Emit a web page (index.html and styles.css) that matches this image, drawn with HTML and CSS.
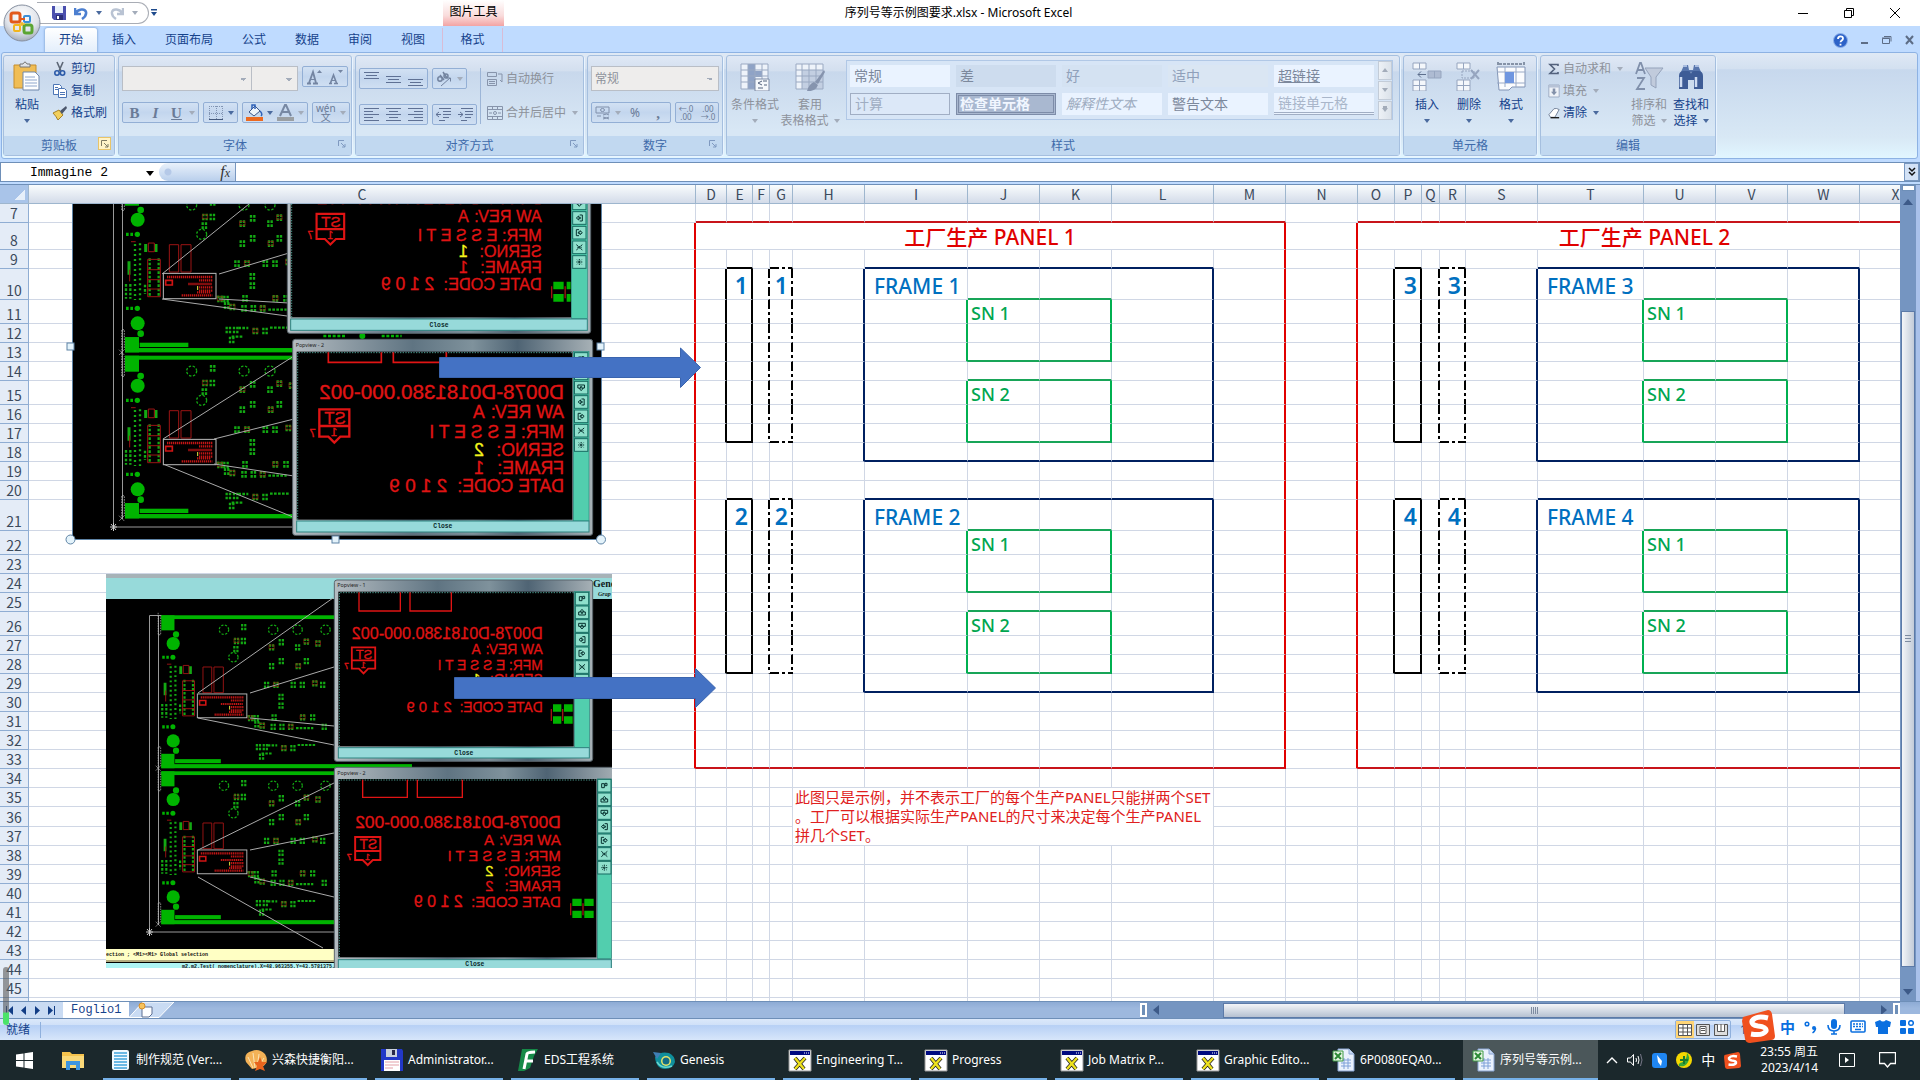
FILE: index.html
```html
<!DOCTYPE html>
<html lang="zh-CN">
<head>
  <meta charset="UTF-8" />
  <meta name="viewport" content="width=device-width, initial-scale=1.0" />
  <title>序列号等示例图要求.xlsx - Microsoft Excel</title>
  <link rel="stylesheet" href="styles.css">
</head>
<body>

<!-- Title bar -->
<header class="titlebar">
  <button class="office-btn" aria-label="Office">
    <svg width="38" height="38" viewBox="0 0 38 38">
      <defs>
        <radialGradient id="orb" cx="50%" cy="30%" r="75%"><stop offset="0" stop-color="#fff"/><stop offset=".6" stop-color="#dfe3ea"/><stop offset="1" stop-color="#9aa3b3"/></radialGradient>
      </defs>
      <circle cx="19" cy="19" r="18" fill="url(#orb)" stroke="#8790a0"/>
      <g fill="none" stroke-width="3">
        <rect x="8" y="9" width="9" height="9" rx="2" stroke="#e2591c"/>
        <rect x="21" y="12" width="6" height="6" rx="1" stroke="#3a8fd8" stroke-width="2"/>
        <rect x="11" y="21" width="6" height="6" rx="1" stroke="#f2b51d" stroke-width="2"/>
        <rect x="21" y="21" width="8" height="8" rx="2" stroke="#5ba532"/>
      </g>
      <path d="M17 15h5" stroke="#e2591c" stroke-width="2"/>
      <path d="M19 18v4M16 20h6" stroke="#f2b51d" stroke-width="1.500"/>
    </svg>
  </button>
  <div class="qat">
    <button aria-label="保存"><svg width="14" height="14" viewBox="0 0 14 14"><path d="M0 0h14v14H2l-2-2z" fill="#4a4fae"/><path d="M3 0h8v7H3z" fill="#e8f0fb"/><path d="M4 9h7v5H4z" fill="#2b2f78"/><path d="M5 10h2v3H5z" fill="#fff"/></svg></button>
    <button aria-label="撤消"><svg width="14" height="14" viewBox="0 0 14 14"><path d="M1 2v6h6M2 7c2-4 9-5 10-1 .6 3-1 5-4 7" fill="none" stroke="#4c7fd0" stroke-width="2.6"/></svg></button>
    <i class="caret blue"></i>
    <button aria-label="恢复"><svg width="14" height="14" viewBox="0 0 14 14"><path d="M13 2v6H7M12 7C10 3 3 2 2 6c-.6 3 1 5 4 7" fill="none" stroke="#b9c3d3" stroke-width="2.4"/></svg></button>
    <i class="caret"></i>
  </div>
  <button class="qat-more" aria-label="自定义快速访问工具栏"><svg width="6" height="8" viewBox="0 0 6 8"><path d="M0 0h6v1.500H0zM0 3h6L3 7z" fill="#1e4a8c"/></svg></button>
  <span class="tool-title">图片工具</span>
  <h1>序列号等示例图要求.xlsx - Microsoft Excel</h1>
  <div class="window-btns">
    <button aria-label="最小化"><svg width="10" height="10"><path d="M0 5.500h10" stroke="#000"/></svg></button>
    <button aria-label="还原"><svg width="10" height="10" fill="none" stroke="#000"><path d="M.5 2.500h7v7h-7zM2.500 2.500v-2h7v7h-2"/></svg></button>
    <button aria-label="关闭"><svg width="10" height="10"><path d="M0 0l10 10M10 0L0 10" stroke="#000"/></svg></button>
  </div>
</header>

<!-- Ribbon tabs -->
<nav class="tabs">
  <a href="#" class="active">开始</a>
  <a href="#">插入</a>
  <a href="#">页面布局</a>
  <a href="#">公式</a>
  <a href="#">数据</a>
  <a href="#">审阅</a>
  <a href="#">视图</a>
  <a href="#" class="context">格式</a>
  <div class="doc-btns">
    <button aria-label="帮助"><svg width="15" height="15" viewBox="0 0 15 15"><circle cx="7.500" cy="7.500" r="7" fill="#2c62c8" stroke="#8fb2ea"/><path d="M5 6c0-3.500 5-3.500 5-.5C10 7.500 7.500 7.300 7.500 9.300M7.500 10.800v1.700" fill="none" stroke="#fff" stroke-width="1.800"/></svg></button>
    <button aria-label="最小化窗口"><svg width="8" height="10"><path d="M0 8h7" stroke="#5d6d86" stroke-width="2"/></svg></button>
    <button aria-label="还原窗口"><svg width="10" height="10" fill="none" stroke="#5d6d86"><path d="M.5 3.500h7v5h-7zM2 1.500h7v5M0 3h8"/></svg></button>
    <button aria-label="关闭窗口"><svg width="9" height="10"><path d="M1 1l7 8M8 1L1 9" stroke="#5d6d86" stroke-width="2"/></svg></button>
  </div>
</nav>

<!-- Ribbon -->
<section class="ribbon">
  <div class="group g-clip">
    <div class="group-body">
      <button class="big">
        <svg width="28" height="30" viewBox="0 0 28 30"><path d="M1 4h22v23H1z" fill="#f0bd55" stroke="#c58d2c"/><path d="M7 6V3h3q2-4 4 0h3v3z" fill="#dfe3e8" stroke="#777"/><path d="M10 11h12l4 4v14H10z" fill="#fdfeff" stroke="#6f87ab"/><path d="M12 16h10M12 19h12M12 22h12M12 25h12" stroke="#8ea6cc"/></svg>
        <span>粘贴</span><i class="caret blue"></i>
      </button>
      <div class="stack">
        <button class="small"><svg width="16" height="16" viewBox="0 0 16 16"><path d="M5 1l4 9M11 1L7 10" stroke="#5c6675" stroke-width="1.600"/><circle cx="5" cy="12" r="2.200" fill="none" stroke="#2b5aa8" stroke-width="1.600"/><circle cx="10.500" cy="12" r="2.200" fill="none" stroke="#2b5aa8" stroke-width="1.600"/></svg>剪切</button>
        <button class="small"><svg width="16" height="16" viewBox="0 0 16 16" fill="#fff" stroke="#4d76b5"><path d="M1.500 1.500h6l2 2v8h-8z"/><path d="M6.500 5.500h6l2 2v7h-8z"/><path d="M3 4.500h3M3 6.500h3M8 9.500h5M8 11.500h5"/></svg>复制</button>
        <button class="small"><svg width="16" height="16" viewBox="0 0 16 16"><path d="M1 8l6-3 4 5-5 5q-2-4-5-7z" fill="#f2cf5b" stroke="#a58026"/><path d="M8 6l6-5 1 2-5 6z" fill="#4b566b"/></svg>格式刷</button>
      </div>
    </div>
    <h2>剪贴板<button class="launcher hot" aria-label="剪贴板选项"><svg width="8" height="8" fill="none" stroke="#7e7a62"><path d="M.5 6V.5H6M3 3l4 4M7 4v3H4"/></svg></button></h2>
  </div>

  <div class="group g-font">
    <div class="group-body rows">
      <div class="row">
        <select class="combo font-name" aria-label="字体"><option></option></select><select class="combo font-size" aria-label="字号"><option></option></select>
        <div class="btns push">
          <button aria-label="增大字号"><svg width="17" height="16" viewBox="0 0 17 16" fill="none" stroke="#7485a2"><path d="M1 14.500h4M7 14.500h5M3 14L7 3l3 11" stroke-width="1.800"/><path d="M4 10.500h5"/><path d="M11 4h5l-2.500-3z" fill="#7485a2" stroke="none"/></svg></button>
          <button aria-label="减小字号"><svg width="17" height="16" viewBox="0 0 17 16" fill="none" stroke="#7485a2"><path d="M2 14.500h3M7 14.500h4M3.500 14L6.500 6l3 8" stroke-width="1.600"/><path d="M4.500 11.500h4"/><path d="M11 1h5l-2.500 3z" fill="#7485a2" stroke="none"/></svg></button>
        </div>
      </div>
      <div class="row">
        <div class="btns biu"><button class="serif">B</button><button class="serif it">I</button><button class="serif un">U</button><i class="caret"></i></div>
        <div class="btns"><button aria-label="边框"><svg width="14" height="14" stroke="#8295b3" stroke-dasharray="1 1"><path d="M0 .5h14M0 7.500h14M.5 0v14M7.500 0v14M13.500 0v14"/><path d="M0 13.500h14" stroke-dasharray="none" stroke="#44597d"/></svg></button><i class="caret blue"></i></div>
        <div class="btns"><button aria-label="填充颜色"><svg width="17" height="17" viewBox="0 0 17 17"><path d="M3 8l6-6 5 5-6 5z" fill="#eef4fc" stroke="#3c5688"/><path d="M6 5V1h3v4M14 7q3 3 1 5" fill="none" stroke="#2f62b8" stroke-width="1.500"/><path d="M0 13h17v4H0z" fill="#ec6a21"/></svg></button><i class="caret blue"></i><button aria-label="字体颜色"><svg width="17" height="17" viewBox="0 0 17 17"><path d="M3 12L8 1h1l5 11M5 8h7" fill="none" stroke="#7788a3" stroke-width="2"/><path d="M0 13h17v4H0z" fill="#9a9fa3"/></svg></button><i class="caret"></i></div>
        <div class="btns"><button class="wen" aria-label="拼音指南"><span>wén</span><span>文</span></button><i class="caret"></i></div>
      </div>
    </div>
    <h2>字体<button class="launcher" aria-label="字体选项"><svg width="8" height="8" fill="none" stroke="#7f99c0"><path d="M.5 6V.5H6M3 3l4 4M7 4v3H4"/></svg></button></h2>
  </div>

  <div class="group g-align">
    <div class="group-body">
      <div class="rows">
        <div class="row">
          <div class="btns three">
            <button aria-label="顶端对齐"><svg class="ln" width="15" height="14"><path d="M0 .5h15M2 3.500h11M0 6.500h15"/></svg></button>
            <button aria-label="垂直居中"><svg class="ln" width="15" height="14"><path d="M0 4.500h15M2 7.500h11M0 10.500h15"/></svg></button>
            <button aria-label="底端对齐"><svg class="ln" width="15" height="14"><path d="M0 7.500h15M2 10.500h11M0 13.500h15"/></svg></button>
          </div>
          <div class="btns"><button aria-label="方向"><svg width="17" height="16" viewBox="0 0 17 16" fill="none" stroke="#73839f" stroke-width="1.500"><circle cx="4" cy="8" r="2.200"/><path d="M4 4l4 5M7 1l4 6"/><circle cx="10" cy="5" r="2"/><path d="M5 15l9-8M11 7h3.500v3.500" stroke-width="1"/></svg></button><i class="caret"></i></div>
        </div>
        <div class="row">
          <div class="btns three">
            <button aria-label="左对齐"><svg class="ln" width="15" height="14"><path d="M0 .5h15M0 3.500h9M0 6.500h15M0 9.500h9M0 12.500h15"/></svg></button>
            <button aria-label="居中"><svg class="ln" width="15" height="14"><path d="M0 .5h15M3 3.500h9M0 6.500h15M3 9.500h9M0 12.500h15"/></svg></button>
            <button aria-label="右对齐"><svg class="ln" width="15" height="14"><path d="M0 .5h15M6 3.500h9M0 6.500h15M6 9.500h9M0 12.500h15"/></svg></button>
          </div>
          <div class="btns two">
            <button aria-label="减少缩进量"><svg class="ln" width="15" height="14"><path d="M3 .5h12M7 3.500h8M7 6.500h8M7 9.500h6M3 12.500h6M5 6.500H0M3 4L0 6.500l3 2.500"/></svg></button>
            <button aria-label="增加缩进量"><svg class="ln" width="15" height="14"><path d="M3 .5h12M7 3.500h8M7 6.500h8M7 9.500h6M3 12.500h6M0 6.500h5M2 4l3 2.500L2 9"/></svg></button>
          </div>
        </div>
      </div>
      <div class="rows wrap">
        <button class="small off"><svg width="16" height="16" fill="none" stroke="#8794ab"><path d="M.5 1.500h9v4h-9zM.5 8.500h9v6h-9zM2 10.500h6M2 12.500h6M11 3h4v8M13 9l2 2"/></svg>自动换行</button>
        <button class="small off"><svg width="16" height="16" fill="none" stroke="#8794ab"><path d="M.5 1.500h15v13H.5zM0 4.500h16M0 11.500h16M5.500 1v3M10.500 1v3M5.500 12v3M10.500 12v3M2 8h3M11 8h3"/><circle cx="8" cy="8" r="1.500"/></svg>合并后居中<i class="caret"></i></button>
      </div>
    </div>
    <h2>对齐方式<button class="launcher" aria-label="对齐选项"><svg width="8" height="8" fill="none" stroke="#7f99c0"><path d="M.5 6V.5H6M3 3l4 4M7 4v3H4"/></svg></button></h2>
  </div>

  <div class="group g-num">
    <div class="group-body rows">
      <div class="row"><select class="combo num-format" aria-label="数字格式"><option>常规</option></select></div>
      <div class="row spread">
        <div class="btns"><button aria-label="会计数字格式"><svg width="16" height="15" fill="none" stroke="#8090ab"><path d="M1 2h13v6H1z"/><ellipse cx="7.500" cy="5" rx="2" ry="1.500"/><path d="M8 10q4-2 6 0M8 12q4 2 6 0M8 14q4-2 6 0M2 11h4"/></svg></button><i class="caret"></i><button class="pct">%</button><button class="comma serif">,</button></div>
        <div class="btns two"><button class="dec">←.0<br>.00</button><button class="dec">.00<br>→.0</button></div>
      </div>
    </div>
    <h2>数字<button class="launcher" aria-label="数字选项"><svg width="8" height="8" fill="none" stroke="#7f99c0"><path d="M.5 6V.5H6M3 3l4 4M7 4v3H4"/></svg></button></h2>
  </div>

  <div class="group g-style">
    <div class="group-body">
      <button class="big off">
        <svg width="30" height="30" viewBox="0 0 30 30"><path d="M1 3h27v25H1z" fill="#eef3fa"/><path d="M8 3h7v25H8zM15 10h7v6h-7z" fill="#8fa3c6"/><path d="M1 3h27v25H1zM1 9h27M1 15h27M1 21h27M8 3v25M15 3v25M22 3v25" fill="none" stroke="#9aa9c2"/><path d="M15 18h14v12H15z" fill="#f5f8fc" stroke="#7c8ba6"/><path d="M22 20l-4 2 4 2M18 27h5M23 20h4M24 24h3" fill="none" stroke="#53627d"/></svg>
        <span>条件格式</span><i class="caret"></i>
      </button>
      <button class="big off">
        <svg width="30" height="30" viewBox="0 0 30 30"><path d="M1 3h27v25H1z" fill="#eef3fa"/><path d="M7 9h21v19H7z" fill="#c3cfe2"/><path d="M1 3h27v25H1zM1 9h27M1 15h27M1 21h27M7 3v25M14 3v25M21 3v25" fill="none" stroke="#9aa9c2"/><path d="M29 9L20 21l3 2 7-12zM19 21q-5 2-7 9 8 1 11-6z" fill="#8694ae"/></svg>
        <span>套用<br>表格格式<i class="caret"></i></span>
      </button>
      <div class="gallery">
        <div class="swatches">
          <button class="s-plain">常规</button><button class="s-bad">差</button><button class="s-good">好</button><button class="s-mid">适中</button><button class="s-link">超链接</button>
          <button class="s-calc">计算</button><button class="s-check">检查单元格</button><button class="s-note">解释性文本</button><button class="s-plain">警告文本</button><button class="s-linked">链接单元格</button>
        </div>
        <div class="gallery-nav"><button aria-label="上"><i class="caret up"></i></button><button aria-label="下"><i class="caret"></i></button><button class="more" aria-label="其他"><i class="caret"></i></button></div>
      </div>
    </div>
    <h2>样式</h2>
  </div>

  <div class="group g-cells">
    <div class="group-body">
      <button class="big"><svg width="30" height="30" viewBox="0 0 30 30" fill="#f4f7fb" stroke="#96a5bf"><path d="M1 2h13v6H1zM1 19h13v11H1zM1 24.500h13M7.500 2v6M7.500 19v11"/><path d="M16 10h13v7H16zM22.500 10v7" fill="#aebbd2"/><path d="M14 13.500H6M9 10.500l-3 3 3 3" fill="none" stroke="#5e6f8d"/></svg><span>插入</span><i class="caret blue"></i></button>
      <button class="big"><svg width="30" height="30" viewBox="0 0 30 30" fill="#f4f7fb" stroke="#96a5bf"><path d="M3 2h13v6H3zM3 19h13v11H3zM3 24.500h13M9.500 2v6M9.500 19v11"/><path d="M8 10h12v7H8z" fill="none" stroke-dasharray="2 1"/><path d="M17 9l8 9M25 9l-8 9" stroke-width="2"/></svg><span>删除</span><i class="caret blue"></i></button>
      <button class="big"><svg width="30" height="30" viewBox="0 0 30 30"><path d="M2 1v4M28 1v4M3 3h24" stroke="#33425c" stroke-dasharray="3 1"/><path d="M1 6h28v20H16l-3 3H3z" fill="#fbfcfe" stroke="#8194b5"/><path d="M9 6v20M20 6v20M1 11h28M1 22h28" stroke="#9aaac6"/><path d="M9 11h9v11H9z" fill="#6f96e0"/></svg><span>格式</span><i class="caret blue"></i></button>
    </div>
    <h2>单元格</h2>
  </div>

  <div class="group g-edit">
    <div class="group-body">
      <div class="stack">
        <button class="small off"><svg width="12" height="14"><path d="M10 4V2.500H2L6.500 7 2 11.500h8V10" fill="none" stroke="#53627d" stroke-width="1.600"/></svg>自动求和<i class="caret"></i></button>
        <button class="small off"><svg width="12" height="16" viewBox="0 0 14 16"><path d="M1 1h12v14H1z" fill="#eef2f8" stroke="#96a5bf"/><path d="M1 1h12v3H1z" fill="#b6c2d6"/><path d="M5.500 5h3v4h2L7 13 3.500 9h2z" fill="#8391aa"/></svg>填充<i class="caret"></i></button>
        <button class="small"><svg width="12" height="14" viewBox="0 0 14 14"><path d="M1 9l6-7q3-1 6 1L8 12H3z" fill="#fff" stroke="#66758f"/><path d="M3 12.500h10" stroke="#111" stroke-width="1.500"/></svg>清除<i class="caret blue"></i></button>
      </div>
      <button class="big off"><svg width="30" height="30" viewBox="0 0 30 30"><path d="M2 13L6 2h1l4 11M4 9h6M3 17h7L3 28h8" fill="none" stroke="#8090ab" stroke-width="1.800"/><path d="M11 7h18l-7 9v11l-5-3v-8z" fill="#c1cbdc" stroke="#95a3bb"/></svg><span>排序和<br>筛选<i class="caret"></i></span></button>
      <button class="big"><svg width="30" height="30" viewBox="0 0 30 30"><path d="M5 11l3-7h4l1 5h4l1-5h4l3 7z" fill="#5876ad"/><path d="M3 15q0-5 5-5h4q3 0 3 3 0-3 3-3h4q5 0 5 5v13h-9v-9h-6v9H3z" fill="#3e5c96"/><path d="M5 16v10M20 16v10" stroke="#cfdcf2" stroke-width="2.500"/><path d="M7 5h4M19 5h4" stroke="#a9bde0" stroke-width="2"/></svg><span>查找和<br>选择<i class="caret blue"></i></span></button>
    </div>
    <h2>编辑</h2>
  </div>
</section>

<!-- Formula bar -->
<section class="formula-bar">
  <div class="name-box"><input type="text" value="Immagine 2" aria-label="名称框"><i class="caret black"></i></div>
  <button class="fx" aria-label="插入函数"><i>f<small>x</small></i></button>
  <input class="formula" type="text" aria-label="编辑栏">
  <button class="expand" aria-label="展开编辑栏"><svg width="8" height="10" fill="none" stroke="#111" stroke-width="1.500"><path d="M1 1l3 3 3-3M1 5l3 3 3-3"/></svg></button>
</section>

<!-- Worksheet -->
<main class="workspace">
  <div class="sheet">
    <table id="grid"></table>
    <svg class="drawings" id="drawings" aria-hidden="true"></svg>
  </div>
  <div class="vscroll">
    <i class="split"></i>
    <i class="caret up dark"></i>
    <i class="thumb"></i>
    <i class="caret dark"></i>
  </div>
</main>

<footer class="sheet-tabs">
  <div class="nav">
    <button aria-label="第一张"><svg width="8" height="9"><path d="M.5 0v9" stroke="#123d85"/><path d="M7 0v9L2 4.500z" fill="#123d85"/></svg></button>
    <button aria-label="上一张"><svg width="8" height="9"><path d="M6 0v9L1 4.500z" fill="#123d85"/></svg></button>
    <button aria-label="下一张"><svg width="8" height="9"><path d="M1 0v9l5-4.500z" fill="#123d85"/></svg></button>
    <button aria-label="最后一张"><svg width="8" height="9"><path d="M0 0v9l5-4.500z" fill="#123d85"/><path d="M6.500 0v9" stroke="#123d85"/></svg></button>
  </div>
  <a href="#" class="sheet-tab">Foglio1</a>
  <button class="new-tab" aria-label="插入工作表"><svg width="46" height="16" viewBox="0 0 46 16"><path d="M0 15.500h30L45 0H14z" fill="#c9dbf3" stroke="#fff"/><path d="M13 5h10v7l-3 3h-7z" fill="#fff" stroke="#5d6f92"/><circle cx="13" cy="4" r="3" fill="#f7c35d" stroke="#d98e26"/></svg></button>
  <div class="hscroll">
    <i class="split"></i>
    <i class="caret left dark"></i>
    <i class="thumb"></i>
    <i class="caret right dark"></i>
    <i class="split"></i>
  </div>
</footer>

<footer class="status">
  <span>就绪</span>
  <div class="views">
    <button class="on" aria-label="普通"><svg width="14" height="12" fill="#fff" stroke="#555"><path d="M.5.5h13v11H.5zM0 4h14M0 8h14M5 0v12M9.500 0v12"/></svg></button>
    <button aria-label="页面布局"><svg width="14" height="12" fill="#ddd" stroke="#555"><path d="M.5.5h13v11H.5z"/><path d="M4 2.500h6v7H4zM5 4.500h4M5 6.500h4" fill="#fff"/></svg></button>
    <button aria-label="分页预览"><svg width="14" height="12" fill="#ddd" stroke="#555"><path d="M.5.5h13v11H.5z"/><path d="M3.500.5v7h7v-7M7 0v7" fill="#fff"/></svg></button>
  </div>
  <span class="zoom">1</span>
  <i class="meter"></i>
  <div class="ime">
    <svg class="sogou" width="34" height="34" viewBox="0 0 34 34"><path d="M1 8L26 1q3 0 4 4l3 22q0 4-4 4L8 34q-4 0-5-4L0 12z" fill="#f0501e"/><path d="M26 9Q14 6 10 12q-1 4 6 5 9 1 8 5-3 5-15 3" fill="none" stroke="#fff" stroke-width="5"/></svg>
    <span>中</span>
    <svg width="14" height="14" viewBox="0 0 14 14"><circle cx="3" cy="4" r="1.800" fill="none" stroke="#0a6fe0" stroke-width="1.500"/><circle cx="10" cy="8" r="2" fill="#0a6fe0"/><path d="M11.500 8q0 3-3 5" fill="none" stroke="#0a6fe0" stroke-width="1.500"/></svg>
    <svg width="14" height="16" viewBox="0 0 14 16"><rect x="4" y="0" width="6" height="10" rx="3" fill="#0a6fe0"/><path d="M1 6q0 6 6 6t6-6M7 12v3M4 15h6" fill="none" stroke="#0a6fe0" stroke-width="1.600"/></svg>
    <svg width="16" height="14" viewBox="0 0 16 14"><rect x="1" y="1" width="14" height="11" rx="1" fill="none" stroke="#0a6fe0" stroke-width="1.600"/><path d="M3 4h10M3 6.500h10" stroke="#0a6fe0" stroke-width="1.500" stroke-dasharray="2 1"/><path d="M5 9.500h6" stroke="#0a6fe0" stroke-width="1.500"/></svg>
    <svg width="16" height="14" viewBox="0 0 16 14"><path d="M0 2l5-2q3 3 6 0l5 2-1 5h-2v7H3V7H1z" fill="#0a6fe0"/></svg>
    <svg width="14" height="14" viewBox="0 0 14 14" fill="#0a6fe0"><rect width="6" height="6" rx="1"/><circle cx="11" cy="3" r="2.300" fill="none" stroke="#0a6fe0" stroke-width="1.500"/><rect y="8" width="6" height="6" rx="1"/><rect x="8" y="8" width="6" height="6" rx="1"/></svg>
  </div>
</footer>

<!-- Windows taskbar -->
<footer class="taskbar">
  <button class="start" aria-label="开始"><svg width="17" height="17" viewBox="0 0 17 17" fill="#fff"><path d="M0 2.500L7.500 1.400V8H0zM8.500 1.200L17 0v8H8.500zM0 9h7.500v6.600L0 14.500zM8.500 9H17v8l-8.500-1.200z"/></svg></button>
  <button class="explorer" aria-label="文件资源管理器"><svg width="22" height="19" viewBox="0 0 22 19"><path d="M0 1h8l2 2h12v14H0z" fill="#f6c34d"/><path d="M0 5h22v12H0z" fill="#fbd978"/><path d="M4 10h14v9h-4v-5H8v5H4z" fill="#3d95e0"/></svg></button>
  <div class="apps">
    <button><svg width="24" height="24" viewBox="0 0 24 24"><rect x="4" y="2" width="17" height="20" rx="2" fill="#f1f9ff"/><path d="M6 5h13M6 8h13M6 11h13M6 14h13M6 17h13M6 20h13" stroke="#3fa2dc" stroke-width="1.600"/></svg>制作规范 (Ver:...</button>
    <button><svg width="24" height="24" viewBox="0 0 24 24"><path d="M8 21L2 14Q-1 5 8 3q7-3 13 3 5 8-3 13z" fill="#f3b257"/><path d="M9 20L4 9M11 20L9 5M13 20l2-14M14 19l6-9" stroke="#fbe3b5"/><path d="M16 9l2 5 5 0-4 4 2 5-5-2-5 2 2-5-3-4h4z" fill="#e8641d"/></svg>兴森快捷衡阳...</button>
    <button><svg width="24" height="24" viewBox="0 0 24 24"><path d="M1 1h21l1 2v20H1z" fill="#2238c8"/><path d="M6 1h11v8H6z" fill="#c9d0dc"/><path d="M12 2h3v5h-3z" fill="#2a2a4a"/><path d="M4 12h16v11H4z" fill="#fff"/><path d="M5 14h14M5 17h14M5 20h8" stroke="#e3a0a8"/></svg>Administrator...</button>
    <button><svg width="24" height="24" viewBox="0 0 24 24"><path d="M6 1h16l-4 7-4 12-6 3H2z" fill="#168a48"/><path d="M8 21L11 6q0-2 8-2M9 13h8" fill="none" stroke="#fff" stroke-width="3"/></svg>EDS工程系统</button>
    <button><svg width="24" height="24" viewBox="0 0 24 24"><path d="M3 9Q8 3 17 5q6 3 6 9-2 7-10 7-9 0-10-12z" fill="#0f8f9c"/><path d="M1 4l8 1-4 6z" fill="#3f7fb5"/><circle cx="14" cy="13" r="5" fill="#e4e36a"/><circle cx="14" cy="13" r="3.500" fill="#126c86"/><path d="M5 14q5 8 15 4" fill="none" stroke="#6ad8cf" stroke-width="1.500"/></svg>Genesis</button>
    <button><svg width="24" height="24"><use href="#xwin"/></svg>Engineering T...</button>
    <button><svg width="24" height="24"><use href="#xwin"/></svg>Progress</button>
    <button><svg width="24" height="24"><use href="#xwin"/></svg>Job Matrix P...</button>
    <button><svg width="24" height="24"><use href="#xwin"/></svg>Graphic Edito...</button>
    <button><svg width="24" height="24"><use href="#xls"/></svg>6P0080EQA0...</button>
    <button class="current"><svg width="24" height="24"><use href="#xls"/></svg>序列号等示例...</button>
  </div>
  <div class="tray">
    <svg width="12" height="8"><path d="M1 7l5-5 5 5" fill="none" stroke="#fff" stroke-width="1.400"/></svg>
    <svg width="16" height="14" viewBox="0 0 16 14" fill="none" stroke="#fff"><path d="M.5 5v4h3l3 3.500v-11L3.500 5zM9 5q1 2 0 4M11 3q2 4 0 8"/><path d="M13.500 1q3 6 0 12" stroke="#778"/></svg>
    <svg width="15" height="15"><rect width="15" height="15" rx="3" fill="#1f86f2"/><path d="M5 2l5 6-1 5-3-4z" fill="#fff"/></svg>
    <svg width="16" height="16"><circle cx="8" cy="8" r="8" fill="#f5d800"/><path d="M11 1a8 8 0 0 1-8 13q-1-2 1-3 7-2 7-10z" fill="#38a838"/><path d="M8 4v8M4 8h8" stroke="#1c7a2a" stroke-width="2"/></svg>
    <span>中</span>
    <svg width="17" height="17" viewBox="0 0 34 34"><path d="M1 6L28 0q3 0 4 4l2 24q0 3-4 4L7 34q-4 0-5-4L0 10z" fill="#f0501e"/><path d="M26 9Q14 6 10 12q-1 4 6 5 9 1 8 5-3 5-15 3" fill="none" stroke="#fff" stroke-width="5"/></svg>
    <time>23:55 周五<br>2023/4/14</time>
    <svg width="16" height="14"><path d="M.5.500h15v13H.5z" fill="none" stroke="#fff"/><path d="M6 4v6l4-3z" fill="#fff"/></svg>
    <svg width="17" height="16"><path d="M.5.500h16v11h-5l-3 3.500-3-3.500h-5z" fill="none" stroke="#fff" stroke-width="1.300"/></svg>
  </div>
</footer>

<svg class="defs" width="0" height="0" aria-hidden="true">
  <symbol id="xwin" viewBox="0 0 24 24"><path d="M1 2h22v21H1z" fill="#fff" stroke="#999"/><path d="M2 3h20v4H2z" fill="#000a80"/><path d="M16 5h5" stroke="#fff" stroke-dasharray="1 1"/><path d="M7 10l9 11M17 10L7 21" stroke="#222" stroke-width="4"/><path d="M7 10l9 11M17 10L7 21" stroke="#eee21e" stroke-width="2.500"/></symbol>
  <symbol id="xls" viewBox="0 0 24 24"><path d="M6 1h11l5 5v17H6z" fill="#e9f1fc" stroke="#8ba6d4"/><path d="M17 1v5h5" fill="#c7d8f2" stroke="#8ba6d4"/><path d="M9 12h10M9 15h10M9 18h10M12 10v11M16 10v11" stroke="#7fa0d8"/><path d="M1 3h10v10H1z" fill="#e6f5e4" stroke="#3f9a45"/><path d="M3 5l6 6M9 5l-6 6" stroke="#2c8a35" stroke-width="2"/></symbol>
</svg>

<script src="script.js"></script>
</body>
</html>
```

FILE: styles.css
```css
/* General */
* {
  box-sizing: border-box;
}

body {
  margin: 0;
  height: 100vh;
  display: flex;
  flex-direction: column;
  overflow: hidden;
  background: #bfdbff;
  color: #15428b;
  font-family: "Noto Sans", "Noto Sans CJK SC", sans-serif;
  font-size: 12px;
  line-height: 16px;
}

button, input, select {
  margin: 0;
  padding: 0;
  border: 0;
  background: none;
  color: inherit;
  font: inherit;
}

button {
  display: flex;
  align-items: center;
  justify-content: center;
}

a {
  color: inherit;
  text-decoration: none;
}

svg {
  display: block;
  flex: none;
}

.defs {
  position: absolute;
}

.caret {
  display: inline-block;
  flex: none;
  border: 3px solid transparent;
  border-top: 4px solid #a3acba;
  border-bottom: 0;
}
.caret.blue { border-top-color: #4a6a9e; }
.caret.black { border-width: 5px 4px 0; border-top-color: #000; }
.caret.dark { border-width: 6px 5px 0; border-top-color: #3d5a88; }
.caret.up { transform: rotate(180deg); }
.caret.left { transform: rotate(90deg); }
.caret.right { transform: rotate(-90deg); }

/* Title bar */
.titlebar {
  position: relative;
  flex: none;
  height: 26px;
  display: flex;
  align-items: center;
  background: #fff;
  color: #000;
}

.office-btn {
  position: absolute;
  left: 3px;
  top: 4px;
  z-index: 2;
}

.qat {
  display: flex;
  align-items: center;
  gap: 8px;
  height: 22px;
  margin-left: 37px;
  padding: 0 10px 0 15px;
  border: 1px solid #a9adb5;
  border-left: 0;
  border-radius: 0 11px 11px 0;
}

.qat-more {
  margin-left: 2px;
}

.tool-title {
  position: absolute;
  left: 443px;
  top: 0;
  width: 61px;
  height: 26px;
  line-height: 24px;
  text-align: center;
  background: linear-gradient(#fff, #f9dcdc 60%, #f3a3a3);
}

h1 {
  flex: 1;
  margin: 0;
  padding-right: 20px;
  text-align: center;
  font-size: 12px;
  font-weight: normal;
}

.window-btns {
  display: flex;
  padding-right: 2px;
}
.window-btns button {
  width: 46px;
  height: 26px;
}

/* Tabs */
.tabs {
  flex: none;
  display: flex;
  height: 26px;
  padding: 2px 6px 0 45px;
  gap: 1px;
}
.tabs a {
  padding: 0 14px;
  line-height: 23px;
}
.tabs .active {
  background: linear-gradient(#fff, #e3eefb);
  border-radius: 3px 3px 0 0;
  box-shadow: 0 0 2px 1px #96b6e2;
}
.tabs .context {
  width: 61px;
  margin-left: 2px;
  padding: 0;
  text-align: center;
  border: 1px solid #d8bcd6;
  border-width: 0 1px;
}

.doc-btns {
  display: flex;
  align-items: center;
  gap: 13px;
  margin-left: auto;
}

/* Ribbon */
.ribbon {
  flex: none;
  display: flex;
  gap: 3px;
  height: 107px;
  margin: 0 2px 3px 1px;
  padding: 2px 1px;
  border: 1px solid #8db2e3;
  border-radius: 3px;
  background: linear-gradient(#dfe9f5, #d3e0f0 15%, #c7d8ed 16%, #d8e8f5 80%, #e1f6ff);
}

.group {
  display: flex;
  flex-direction: column;
  border: 1px solid #a5bfdf;
  border-radius: 3px;
  background: linear-gradient(#dfe8f5, #d3dfef 15%, #c8d8ec 16%, #d8e7f5 75%);
  box-shadow: 1px 1px 0 #e9f4ff;
}
.g-clip { width: 112px; }
.g-font { width: 234px; }
.g-align { width: 229px; }
.g-num { width: 136px; }
.g-style { width: 674px; }
.g-cells { width: 134px; }
.g-edit { width: 176px; }

.group-body {
  flex: 1;
  display: flex;
  padding: 2px 3px 0;
}

.group h2 {
  position: relative;
  margin: 0;
  height: 19px;
  line-height: 20px;
  font-size: 12px;
  font-weight: normal;
  text-align: center;
  color: #3e6aaa;
  background: #c1d8f0;
}

.launcher {
  position: absolute;
  right: 3px;
  top: 1px;
  width: 13px;
  height: 13px;
}
.launcher.hot {
  border: 1px solid #e8c46a;
  background: #fff3c8;
}

.big {
  flex-direction: column;
  justify-content: flex-start;
  width: 42px;
  padding-top: 3px;
}
.big span {
  margin-top: 6px;
  white-space: nowrap;
}
.big > .caret {
  margin-top: 6px;
}
.big span .caret {
  margin: 0 0 2px 5px;
}

.stack {
  display: flex;
  flex-direction: column;
}

.small {
  justify-content: flex-start;
  gap: 3px;
  height: 22px;
  white-space: nowrap;
}

.off {
  color: #8d929b;
}

.g-clip .big { width: 34px; margin: 0 8px 0 3px; }
.g-style .big { width: 50px; margin-right: 5px; }
.g-cells .group-body { padding-left: 2px; }
.g-edit .stack { width: 84px; padding-left: 4px; }
.g-edit .small .caret { margin-left: 3px; }

.rows {
  display: flex;
  flex-direction: column;
  gap: 14px;
}
.group-body.rows, .g-align .rows {
  padding-top: 10px;
}
.g-align .wrap {
  gap: 12px;
  margin: 10px 0 0 3px;
  height: 56px;
  border-left: 1px solid #9cb5d7;
}
.g-align .group-body .wrap {
  padding: 0 0 0 6px;
}
.g-align .wrap .caret { margin-left: 3px; }

.row {
  display: flex;
  gap: 4px;
  height: 22px;
}
.row.spread {
  justify-content: space-between;
}
.row .push {
  margin-left: auto;
}

.combo {
  appearance: none;
  height: 25px;
  padding: 0 3px;
  border: 1px solid #b9bec6;
  border-radius: 0;
  color: #8d929b;
  background: linear-gradient(45deg, transparent 50%, #a3acba 50%) right 8px top 11px / 3px 3px no-repeat,
    linear-gradient(-45deg, transparent 50%, #a3acba 50%) right 5px top 11px / 3px 3px no-repeat, #eeedec;
}
.font-name { width: 131px; margin-right: -5px; }
.font-size { width: 47px; }
.num-format { width: 128px; }

.btns {
  display: flex;
  align-items: center;
  height: 21px;
  padding: 0 3px;
  gap: 4px;
  border: 1px solid #93afd5;
  border-radius: 2px;
  color: #6a7b97;
  background: linear-gradient(#d2e1f3, #c3d6ee 50%, #cfdff2);
}
.g-font .btns button { min-width: 17px; }
.btns.biu { width: 79px; justify-content: space-between; }
.btns.three { width: 69px; justify-content: space-around; }
.btns.two { width: 45px; justify-content: space-around; padding: 0; gap: 2px; }

.serif {
  font-family: "Liberation Serif", serif;
  font-size: 15px;
  font-weight: bold;
}
.it { font-style: italic; }
.un { text-decoration: underline; }
.ln { fill: none; stroke: #5f7194; }
.comma { width: 18px; }
.pct { width: 20px; }
.dec { font-size: 8px; line-height: 8px; }
.wen {
  flex-direction: column;
  font-size: 10px;
  line-height: 9px;
}

/* Cell style gallery */
.gallery {
  display: flex;
  align-items: center;
  height: 60px;
  margin: 2px 0 0 6px;
  padding-left: 3px;
  border: 1px solid #b1c8e6;
  background: #d7e5f6;
}
.swatches {
  display: grid;
  grid-template-columns: repeat(5, 100px);
  gap: 6px;
}
.swatches button {
  justify-content: flex-start;
  height: 22px;
  padding-left: 4px;
  font-size: 14px;
  color: #7c889c;
  background: #eaf3ff;
}
.swatches .s-bad { background: #cddcee; }
.swatches .s-good { background: #d4e2f2; color: #8fa0ba; }
.swatches .s-mid { background: #dae6f3; color: #8fa0ba; }
.swatches .s-link { text-decoration: underline; }
.swatches .s-calc { border: 1px solid #a1aec4; background: #dce8f8; color: #a0adc2; }
.swatches .s-check { border: 3px double #7d8ca8; padding-left: 1px; background: #a9b8d0; color: #f1f6ff; font-weight: bold; }
.swatches .s-note { font-style: italic; color: #9dabc0; }
.swatches .s-linked { border-bottom: 3px double #a1aec4; color: #a9b6ca; }

.gallery-nav {
  display: flex;
  flex-direction: column;
  gap: 1px;
  margin-left: 4px;
}
.gallery-nav button {
  width: 14px;
  height: 19px;
  border: 1px solid #c3ccd8;
  background: linear-gradient(90deg, #edf1f6, #dbe2ea);
}
.gallery-nav .more .caret {
  box-shadow: 0 -3px 0 -1px #a3acba;
}

/* Formula bar */
.formula-bar {
  flex: none;
  display: flex;
  height: 20px;
  border: 1px solid #6e8fb8;
  background: #fff;
}
.name-box {
  display: flex;
  align-items: center;
  width: 158px;
  padding: 2px 5px 0 29px;
}
.name-box input {
  flex: 1;
  min-width: 0;
  color: #000;
  font-family: "Liberation Mono", monospace;
  font-size: 13px;
}
.fx {
  width: 77px;
  padding-right: 5px;
  justify-content: flex-end;
  border-right: 1px solid #7897c0;
  border-radius: 9px 0 0 9px;
  background: radial-gradient(circle at 9px 9px, #b5c9e8 3px, transparent 4px), linear-gradient(#e9f1fb, #b9cfec);
  color: #333;
  font-family: "Liberation Serif", serif;
  font-size: 16px;
}
.fx small { font-size: 12px; }
.formula {
  flex: 1;
}
.expand {
  width: 15px;
  border: 1px solid #7897c0;
  background: #d3e2f6;
}

/* Worksheet */
.workspace {
  flex: 1;
  min-height: 0;
  display: flex;
  margin-top: 2px;
  border-top: 1px solid #6e8fb8;
}
.sheet {
  position: relative;
  flex: 1;
  min-width: 0;
  overflow: hidden;
  background: #fff;
}

#grid {
  table-layout: fixed;
  width: 1932px;
  border-collapse: separate;
  border-spacing: 0;
}
#grid th {
  padding: 0;
  border: 1px solid #9eb6ce;
  border-width: 0 1px 1px 0;
  background: #e4ecf7;
  color: #3b4a5c;
  font-family: "Noto Sans CJK SC", sans-serif;
  font-size: 14px;
  font-weight: normal;
  line-height: 18px;
  vertical-align: bottom;
}
#grid thead th {
  height: 19px;
  background: linear-gradient(#f9fcfd, #d3dbe9);
}
#grid thead th:first-child {
  background: linear-gradient(135deg, transparent 50%, #e6effa 51%) 14px 4px / 11px 11px no-repeat, #a9c4e9;
}
#grid tbody th {
  border-color: #8fadd3;
}
#grid td {
  padding: 0;
  border: 0 solid #d0d7e5;
  border-width: 0 1px 1px 0;
  line-height: 18px;
  vertical-align: bottom;
  white-space: nowrap;
}

#grid td.title {
  text-align: center;
  font-size: 21px;
  font-weight: 500;
  line-height: 24px;
  color: #e00000;
}
#grid td.frame {
  padding-left: 9px;
  font-size: 21px;
  font-weight: 500;
  line-height: 26px;
  color: #0070c0;
}
#grid td.num {
  padding-right: 3px;
  text-align: right;
  font-size: 23px;
  font-weight: 600;
  line-height: 27px;
  color: #0070c0;
}
#grid td.sn {
  padding-left: 3px;
  font-size: 18px;
  font-weight: 500;
  line-height: 19px;
  color: #00a650;
}
#grid td.remark {
  padding-left: 2px;
  line-height: 19px;
  font-size: 15px;
  color: #e02020;
  vertical-align: top;
}

/* Thick range outlines, drawn on the right and bottom cell edges */
#grid .r-red { border-right: 2px solid #e00000; }
#grid .b-red { border-bottom: 2px solid #c8141a; }
#grid .r-navy { border-right: 2px solid #002060; }
#grid .b-navy { border-bottom: 2px solid #002060; }
#grid .r-green { border-right: 2px solid #00b050; }
#grid .b-green { border-bottom: 2px solid #18a558; }
#grid .r-black { border-right: 2px solid #000; }
#grid .b-black { border-bottom: 2px solid #000; }
#grid .r-dash, #grid .b-dash {
  --v: linear-gradient(transparent, transparent);
  --h: linear-gradient(transparent, transparent);
  background: var(--v) right / 2px 100% no-repeat, var(--h) bottom / 100% 2px no-repeat;
  background-origin: border-box;
}
#grid .r-dash {
  border-right: 2px solid transparent;
  --v: repeating-linear-gradient(#000 0 9px, transparent 9px 12px, #000 12px 15px, transparent 15px 18px);
}
#grid .b-dash {
  border-bottom: 2px solid transparent;
  --h: repeating-linear-gradient(90deg, #000 0 9px, transparent 9px 12px, #000 12px 15px, transparent 15px 18px);
}

.drawings {
  position: absolute;
  left: 0;
  top: 19px;
  width: 100%;
  height: calc(100% - 19px);
}

/* Scroll bars */
.vscroll {
  display: flex;
  flex-direction: column;
  align-items: center;
  flex: none;
  width: 20px;
  padding-bottom: 6px;
  border-right: 4px solid #a9c1ea;
  background: #7595c1;
}
.vscroll .split {
  width: 13px;
  height: 6px;
  border: 1px solid #6e8fb8;
  background: #fff;
  margin-bottom: 8px;
}
.vscroll .thumb {
  flex: 1;
  width: 14px;
  margin: 106px 0 22px;
  border: 1px solid #5c7aa8;
  background: repeating-linear-gradient(#7d8ba0 0 1px, transparent 1px 3px) center / 6px 9px no-repeat, linear-gradient(90deg, #f3f5f8, #c2cbd8);
}

.sheet-tabs {
  flex: none;
  display: flex;
  height: 18px;
  border: 1px solid #6e8fb8;
  border-width: 1px 0;
  background: linear-gradient(#8dabd5, #9db8de 40%);
}
.nav {
  display: flex;
  width: 63px;
  padding-left: 6px;
  gap: 6px;
  background: #c9dbf3;
}
.sheet-tab {
  padding: 0 8px;
  background: #fff;
  font-family: "Liberation Mono", monospace;
  font-size: 12px;
  line-height: 17px;
}
.hscroll {
  display: flex;
  align-items: center;
  width: 760px;
  margin: 0 20px 0 auto;
  background: #7595c1;
}
.hscroll .split {
  width: 7px;
  height: 14px;
  border: 2px solid #fff;
  background: #6e8fb8;
}
.hscroll .caret { margin: 0 4px; }
.hscroll .thumb {
  flex: 1;
  height: 15px;
  margin: 0 30px 0 58px;
  border: 1px solid #5c7aa8;
  background: repeating-linear-gradient(90deg, #7d8ba0 0 1px, transparent 1px 2px) center / 7px 7px no-repeat, linear-gradient(#f3f5f8, #b6c1d1);
}

/* Status bar */
.status {
  position: relative;
  flex: none;
  display: flex;
  align-items: center;
  height: 21px;
  padding-left: 6px;
  background: linear-gradient(#dbe8fa, #cfe0f8 30%, #b7d0f5 31%, #d7e6fa);
}
.status > span:first-child {
  width: 35px;
  border-right: 1px solid #8fb0dd;
}
.views {
  display: flex;
  margin-left: auto;
  border: 1px solid #8fb0dd;
  border-radius: 2px;
}
.views button {
  width: 18px;
  height: 17px;
}
.views .on { background: #ffd577; }
.zoom {
  width: 8px;
  margin: 0 172px 0 9px;
}
.meter {
  position: absolute;
  left: 3px;
  bottom: 15px;
  width: 6px;
  height: 58px;
  border-radius: 3px;
  background: linear-gradient(rgba(90, 90, 90, .6) 78%, #4be36a 79%);
}
.ime {
  position: absolute;
  right: 0;
  bottom: 0;
  display: flex;
  align-items: center;
  gap: 9px;
  height: 26px;
  padding: 0 6px 0 18px;
  border-radius: 4px 0 0 4px;
  background: #fff;
  color: #0a6fe0;
  font-size: 15px;
  font-weight: bold;
}
.sogou {
  position: absolute;
  left: -20px;
  top: -5px;
}

/* Taskbar */
.taskbar {
  flex: none;
  display: flex;
  align-items: center;
  height: 40px;
  padding-left: 16px;
  background: #1b282c;
  color: #fff;
}
.explorer { margin: 0 19px 0 29px; }
.apps {
  display: flex;
  gap: 8px;
}
.apps button {
  justify-content: flex-start;
  gap: 4px;
  width: 128px;
  height: 40px;
  padding: 2px 0 0 5px;
  border-bottom: 2px solid #76b1e8;
  white-space: nowrap;
}
.apps .current {
  width: 135px;
  padding-left: 9px;
  background: #4b575a;
}
.tray {
  display: flex;
  align-items: center;
  gap: 9px;
  margin-left: auto;
  padding-right: 24px;
}
.tray span { font-size: 14px; }
.tray time {
  margin: 0 12px 0 10px;
  text-align: right;
}
.tray time + svg { margin-right: 15px; }
```

FILE: script.js
```js
// ---- Worksheet grid ----
const cols = [
  ["C", 667], ["D", 31], ["E", 26], ["F", 17], ["G", 23], ["H", 72], ["I", 103], ["J", 72], ["K", 72],
  ["L", 102], ["M", 72], ["N", 72], ["O", 37], ["P", 27], ["Q", 18], ["R", 26], ["S", 72], ["T", 106],
  ["U", 72], ["V", 72], ["W", 72], ["X", 72]
];
const rowHeights = { 8: 27, 10: 31, 11: 24, 15: 24, 21: 31, 22: 24, 26: 24 };
const letters = cols.map(c => c[0]);
const lastRow = 45;

// from cell, to cell, colour
const ranges = [["D", 8, "M", 33, "red"], ["O", 8, "Y", 33, "red"]];
const texts = {
  D8: { cls: "title", text: "工厂生产 PANEL 1", span: 10 },
  O8: { cls: "title", text: "工厂生产 PANEL 2", span: 10 },
  H35: {
    cls: "remark", span: 5, rows: 3,
    text: "此图只是示例，并不表示工厂的每个生产PANEL只能拼两个SET<br>。工厂可以根据实际生产PANEL的尺寸来决定每个生产PANEL<br>拼几个SET。"
  }
};

function addFrame(n, row, e, g, f1, f2, s1, s2) {
  ranges.push([f1, row, f2, row + 8, "navy"], [e, row, e, row + 7, "black"], [g, row, g, row + 7, "dash"],
    [s1, row + 1, s2, row + 3, "green"], [s1, row + 5, s2, row + 7, "green"]);
  texts[e + row] = { cls: "num", text: n };
  texts[g + row] = { cls: "num", text: n };
  texts[f1 + row] = { cls: "frame", text: "FRAME " + n };
  texts[s1 + (row + 1)] = { cls: "sn", text: "SN 1" };
  texts[s1 + (row + 5)] = { cls: "sn", text: "SN 2" };
}
addFrame(1, 10, "E", "G", "I", "L", "J", "K");
addFrame(2, 21, "E", "G", "I", "L", "J", "K");
addFrame(3, 10, "P", "R", "T", "W", "U", "V");
addFrame(4, 21, "P", "R", "T", "W", "U", "V");

const edges = {};
function edge(c, r, cls) {
  if (c < 0 || c >= cols.length) return;
  const key = letters[c] + r;
  edges[key] = (edges[key] || "") + " " + cls;
}
ranges.forEach(([a, r1, b, r2, color]) => {
  const c1 = letters.indexOf(a);
  const c2 = b === "Y" ? cols.length : letters.indexOf(b);
  for (let r = r1; r <= r2; r++) {
    edge(c1 - 1, r, "r-" + color);
    edge(c2, r, "r-" + color);
  }
  for (let c = c1; c <= c2; c++) {
    edge(c, r1 - 1, "b-" + color);
    edge(c, r2, "b-" + color);
  }
});
edges.D8 = " r-red";

let html = '<colgroup><col style="width:29px">' + cols.map(c => `<col style="width:${c[1]}px">`).join("") + "</colgroup>";
html += "<thead><tr><th></th>" + letters.map(l => `<th>${l}</th>`).join("") + "</tr></thead><tbody>";
const covered = new Set();
for (let r = 7; r <= lastRow + 1; r++) {
  html += `<tr style="height:${rowHeights[r] || 19}px"><th>${r > lastRow ? "" : r}</th>`;
  letters.forEach((l, c) => {
    const key = l + r;
    if (covered.has(key)) return;
    const t = texts[key] || {};
    for (let i = 0; i < (t.rows || 1); i++) {
      for (let j = 0; j < (t.span || 1); j++) covered.add(letters[c + j] + (r + i));
    }
    html += `<td class="${t.cls || ""}${edges[key] || ""}" colspan="${t.span || 1}" rowspan="${t.rows || 1}">${t.text || ""}</td>`;
  });
  html += "</tr>";
}
document.getElementById("grid").innerHTML = html + "</tbody>";

// ---- Board drawing, in units of a third of a pixel ----
const green = "#00b400";
const chips = [
  [263, 28], [240, 72], [262, 72], [238, 98], [352, 92], [383, 76], [435, 92], [463, 74], [352, 152], [383, 136],
  [437, 152], [463, 136], [336, 212], [366, 212], [421, 212], [450, 212], [490, 207], [382, 250], [382, 278],
  [285, 318], [303, 318], [360, 316], [451, 316], [483, 316], [305, 338], [322, 342], [357, 346], [385, 346],
  [413, 346], [310, 411], [332, 411], [391, 414], [420, 414], [320, 441], [500, 80], [515, 212], [520, 346]
];
function board(x, y, scale, width) {
  const strokes = chips.map(([a, b]) => `M${a - 5} ${b}v20M${a + 5} ${b}v20`).join("");
  const reds = chips.filter((c, i) => i % 3 === 1).map(([a, b]) => `M${a - 8} ${b + 3}h16v12h-16z`).join("");
  const rings = [[200, 46], [357, 46], [435, 46], [230, 134]].concat(width > 510 ? [[524, 46]] : [])
    .map(([a, b]) => `<circle cx="${a}" cy="${b}" r="15"/>`).join("");
  return `<g transform="translate(${x} ${y}) scale(${scale / 3})">
    <g fill="${green}">
      <rect width="${width}" height="12"/><rect width="42" height="48"/><rect y="442" width="42" height="46"/>
      <rect y="475" width="${width}" height="13"/><rect x="44" y="459" width="146" height="13"/>
      <circle cx="38" cy="90" r="21"/><circle cx="47" cy="61" r="10"/><circle cx="37" cy="134" r="8"/>
      <circle cx="37" cy="356" r="8"/><circle cx="38" cy="401" r="21"/><circle cx="47" cy="432" r="10"/>
      <path d="M3 129h8v10H3zM16 129h8v10h-8zM3 351h8v10H3zM16 351h8v10h-8z"/>
    </g>
    <g fill="none" stroke="#13a813" stroke-width="7">
      <path d="M30 163v168M45 161v170" stroke-dasharray="6 9"/>
      <path d="M3 283v44M16 283v44M74 206v117M101 206v117M60 285v28" stroke-dasharray="8 5"/>
      <path d="M62 163v24M93 163v24M12 215v40" stroke-width="9"/>
      <path d="${strokes}" stroke-dasharray="8 4"/>
      <path d="M340 415h30M435 414h60M430 360h55M320 441h34M275 322h20" stroke-dasharray="8 4"/>
      <g stroke-width="4" stroke-dasharray="7 5">${rings}</g>
    </g>
    <g fill="none" stroke="#9c1414" stroke-width="3">
      <path d="M133 165h28v82h-28zM168 165h30v82h-30zM70 160h18v26H70zM68 209h38v112H68zM68 240h38M68 270h38M68 298h38M14 240v35M18 156h14"/>
      <path d="${reds}" stroke-width="2"/>
    </g>
    <path d="M-10-8v70h8v-60M-10 490v-70h8v60" fill="none" stroke="#ccc" stroke-width="2" stroke-dasharray="5 3"/>
    <path d="M-18 480l16 16M-2 480l-16 16" stroke="#aaa" stroke-width="2"/>
    <rect x="115" y="251" width="158" height="76" fill="#000" stroke="#bbb" stroke-width="3"/>
    <path d="M126 262h136M222 272h40M190 283h72M222 293h40M222 303h40M216 308h42M170 317h92" stroke="#c01414" stroke-width="7" stroke-dasharray="4 2"/>
    <path d="M122 272h20v14h-20z" fill="none" stroke="#d01414" stroke-width="5"/>
    <path d="M218 289v12" stroke="#e8e840" stroke-width="3"/>
  </g>`;
}

// Mirrored legend shown in every zoom window
function legend(x, y, scale, serno, frame) {
  return `<g transform="translate(${x} ${y}) scale(${-scale} ${scale})" fill="#e01414" stroke="#e01414" stroke-width="1" font-family="Liberation Sans" font-size="53" xml:space="preserve">
    <text font-size="62">D0078-D0181380.000-002</text>
    <text y="58">AW REV:</text><text x="238" y="58">A</text>
    <text y="118">MFR: E S S E T I</text>
    <text y="172">SERNO:</text><text x="240" y="172" fill="#f4f41c" stroke="#f4f41c">${serno}</text>
    <text y="225">FRAME:</text><text x="240" y="225">${frame}</text>
    <text y="280">DATE CODE:</text><text x="350" y="280" font-size="57">2 1 0 9</text>
    <path d="M644 31h90v82h-27l-18 18-18-18h-27zM644 81h90" fill="none" stroke-width="7"/>
    <text x="655" y="74" font-size="50">ST</text><text x="680" y="112" font-size="34">1</text><text x="745" y="114" font-size="34">7</text>
  </g>`;
}

function popup(o) {
  const icons = o.icons.map((cy, i) => {
    const glyphs = [
      "M-8-6h8v12h-8zM2-7h6v7H2z", "M-10-1v9H10V-1H5M-10-1h5M0-9l6 7H2v5h-4v-5h-4z", "M-10 1v-9H10V1H5M-10 1h5M0 9l6-7H2v-5h-4v5h-4z",
      "M1-9h8V9H1M-9 0l7-6v4h5v4h-5v4z", "M-1-9h-8V9h8M9 0L2-6v4h-5v4h5v4z", "M-9-8L-3-3M9-8L3-3M-9 8l6-5M9 8L3 3M-2-2h4v4h-4zM-7 0h2M5 0h2", "M0-9v4M0 9V5M-9 0h4M9 0H5M-2-2h4v4h-4zM-7-7l2 2M7 7L5 5M7-7L5-5M-7 7l2-2"
    ];
    return `<g transform="translate(${o.sx + o.sw / 2} ${cy})"><rect x="-20" y="-19" width="40" height="38" fill="#8fe0cc" stroke="#176b62" stroke-width="3"/><path d="${glyphs[i]}" fill="none" stroke="#06302e" stroke-width="3"/></g>`;
  }).join("");
  return `<rect x="${o.x}" y="${o.y}" width="${o.w}" height="${o.h}" rx="8" fill="url(#chrome)" stroke="#59646b" stroke-width="3"/>
    ${o.title ? `<text x="${o.x + 9}" y="${o.y + 22}" font-family="Noto Sans" font-size="16" fill="#222">${o.title}</text>` : ""}
    <rect x="${o.bx}" y="${o.by}" width="${o.bw}" height="${o.bh}" fill="#000"/>
    <path d="M${o.bx + 3} ${o.by + o.bh}V${o.by + 3}h${o.bw}" fill="none" stroke="#4a9a90" stroke-width="3" stroke-dasharray="4 4"/>
    <rect x="${o.sx}" y="${o.by}" width="${o.sw}" height="${o.bh + 4}" fill="#52ceae" stroke="#2b8f80" stroke-width="2"/>${icons}
    <rect x="${o.bx}" y="${o.cy}" width="${o.sx + o.sw - o.bx}" height="${o.ch}" fill="#97dada" stroke="#2f8480" stroke-width="3"/>
    <text x="${(o.bx + o.sx + o.sw) / 2}" y="${o.cy + o.ch / 2 + 6}" text-anchor="middle" font-family="Liberation Mono" font-weight="bold" font-size="19" fill="#0b2b2b">Close</text>`;
}

const pads = (x, y, w, h, gap, last) => `<path d="M${x} ${y}h${w}v${h}h${-w}zM${x} ${y + h + 14}h${w}v${h}h${-w}zM${x + w + gap} ${y}h${last}v${h}h${-last}zM${x + w + gap} ${y + h + 14}h${last}v${h}h${-last}z" fill="${green}"/>
  <path d="M${x - 5} ${y + 14}v36M${x + w + gap / 2} ${y + 14}v36" stroke="#a01414" stroke-width="4"/>`;

const range7 = (start, step, count) => Array.from({ length: count }, (v, i) => start + step * i);

const picture1 = `<g clip-path="url(#clip1)">
  <rect x="72" y="200" width="530" height="340"/>
  <path d="M113.500 200V527H300M122.500 200V519" fill="none" stroke="#999"/>
  ${board(125, 189.700, 1, 520)}${board(125, 355.700, 1, 520)}
  <path d="M162 274L249 204M219 274l70-21M219 299l70 4M162 299l125 17M163 439L294 356M214 439l80-20M214 464l80 12M163 464l130 53" stroke="#aaa" stroke-width="1"/>
  <path d="M110 527h7M113.500 523v8M111 524l5 6M116 524l-5 6" stroke="#ccc"/>
  <g transform="translate(280 190) scale(.33333)">
    <path d="M130 438h65M305 438h60" stroke="${green}" stroke-width="8" stroke-dasharray="9 5"/><circle cx="247" cy="438" r="9" fill="${green}"/>
    ${popup({ x: 22, y: -90, w: 910, h: 520, bx: 32, by: -50, bw: 841, bh: 432, sx: 874, sw: 48, cy: 387, ch: 34, icons: range7(-48, 44, 7) })}
    ${legend(785, 43, .92, 1, 1)}${pads(820, 275, 31, 23, 9, 12)}
    ${popup({ title: "Popview - 2", x: 38, y: 448, w: 900, h: 588, bx: 50, by: 485, bw: 827, bh: 504, sx: 880, sw: 47, cy: 993, ch: 33, icons: range7(507, 43, 7) })}
    <path d="M145 487v30h159v-30M340 487v30h159v-30" fill="none" stroke="#e01414" stroke-width="5"/>
    ${legend(852, 627, 1, 2, 1)}
  </g></g>
  <g fill="#e4f3fb" stroke="#5e83a5">
    <path d="M72.500 204V539.500H601.500V204" fill="none"/>
    <rect x="67" y="343" width="7" height="7"/><rect x="597" y="343" width="7" height="7"/><rect x="332" y="536" width="7" height="7"/>
    <circle cx="70.500" cy="539.500" r="4.500"/><circle cx="601" cy="539.500" r="4.500"/>
  </g>`;

const picture2 = `<g clip-path="url(#clip2)">
  <rect x="106" y="574" width="506" height="394"/>
  <rect x="106" y="574" width="506" height="4" fill="#a7b3b8"/><rect x="106" y="578" width="506" height="21" fill="#97dada"/>
  <text x="593" y="587" font-family="Liberation Serif" font-weight="bold" font-size="10" fill="#102020">Gene</text>
  <text x="598" y="596" font-family="Liberation Serif" font-style="italic" font-weight="bold" font-size="6" fill="#102020">Grap</text>
  <path d="M149.500 930V615.500H162M158.500 615V925M149 932H340" fill="none" stroke="#999"/>
  ${board(161.300, 615.300, .94, 800)}${board(161.300, 771.300, .94, 800)}
  <path d="M198 693L333 598M250 693l84-26M250 718l84 8M198 718l136 27M198 850L334 783M250 850l84-17M250 877l84 20M198 877l125 71" stroke="#aaa"/>
  <path d="M146 932h7M149.500 928v8M147 929l5 6M152 929l-5 6" stroke="#ccc"/>
  <rect x="106" y="949" width="240" height="11" fill="#ffffc4"/><rect x="106" y="960" width="240" height="2" fill="#b4ac80"/><rect x="106" y="963" width="240" height="5" fill="#aef4f4"/>
  <g font-family="Liberation Mono" font-weight="bold" font-size="5" fill="#111"><text x="106" y="956">ection ; &lt;M1&gt;&lt;M1&gt; Global selection</text><text x="182" y="968">m2,m2.Test( nomenclature).X=48.963355,Y=43.5781375,</text></g>
  <g transform="translate(320 560) scale(.33333)">
    ${popup({ title: "Popview - 1", x: 43, y: 60, w: 775, h: 544, bx: 55, by: 95, bw: 706, bh: 464, sx: 764, sw: 44, cy: 563, ch: 31, icons: range7(116, 41, 7) })}
    <path d="M117 97v56h124v-56M270 97v56h124v-56" fill="none" stroke="#e01414" stroke-width="4"/>
    ${legend(668, 238, .78, 1, 1)}${pads(699, 433, 25, 22, 8, 26)}
    ${popup({ title: "Popview - 2", x: 43, y: 622, w: 850, h: 640, bx: 55, by: 657, bw: 774, bh: 535, sx: 832, sw: 42, cy: 1199, ch: 28, icons: range7(677, 41, 7) })}
    <path d="M128 659v53h134v-53M292 659v53h135v-53" fill="none" stroke="#e01414" stroke-width="4"/>
    ${legend(722, 805, .84, 2, 2)}${pads(757, 1016, 28, 22, 8, 28)}
  </g></g>`;

document.getElementById("drawings").innerHTML = `<defs>
    <linearGradient id="chrome" x2="1" y2="0"><stop offset="0" stop-color="#b4bcc1"/><stop offset=".4" stop-color="#5f7482"/><stop offset=".6" stop-color="#7f929c"/><stop offset=".75" stop-color="#4f6474"/><stop offset="1" stop-color="#a7b1b6"/></linearGradient>
    <clipPath id="clip1"><rect x="72" y="200" width="530" height="340"/></clipPath>
    <clipPath id="clip2"><rect x="106" y="574" width="506" height="394"/></clipPath>
  </defs>
  <g transform="translate(0 -204)">${picture1}${picture2}
    <g fill="#4472c4" stroke="#3a64ae">
      <path d="M439.500 357.500H680.500V348L700.500 367.500L680.500 387.500V377.500H439.500z"/>
      <path d="M454.500 677.500H695.500V668.500L715.500 688L695.500 707.500V698.500H454.500z"/>
    </g>
  </g>`;
```
